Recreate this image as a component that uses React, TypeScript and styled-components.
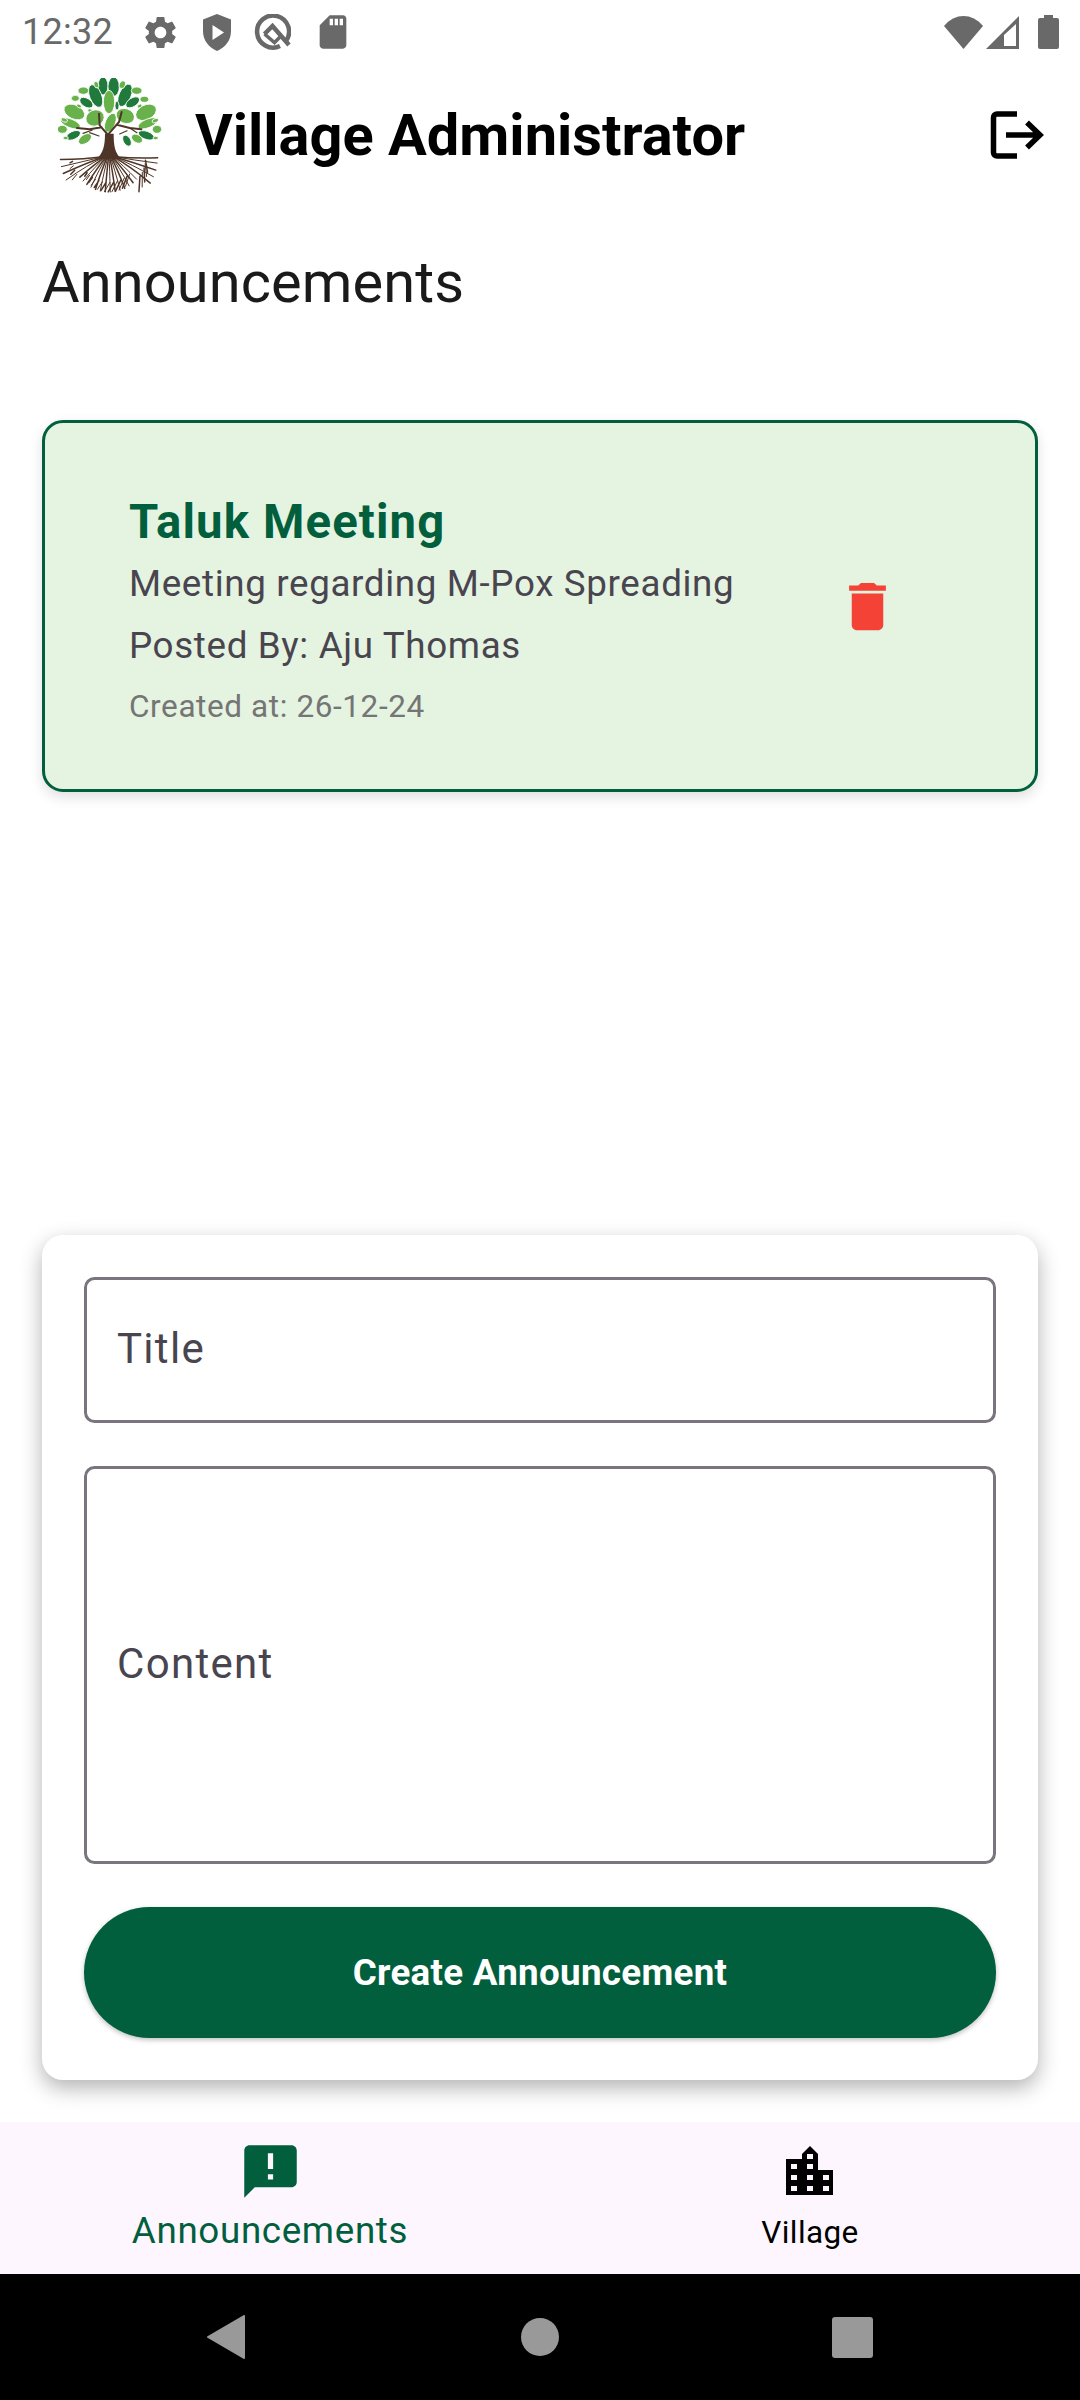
import React from 'react';
import styled, { createGlobalStyle } from 'styled-components';
import { MdAnnouncement, MdDelete, MdSdCard, MdSettings } from 'react-icons/md';

const GlobalStyle = createGlobalStyle`
  html, body {
    margin: 0;
    padding: 0;
    background: #fff;
    font-family: Roboto, "Noto Sans", sans-serif;
  }
`;

const GREEN = '#025f3d';

const Screen = styled.div`
  width: 1080px;
  height: 2400px;
  display: flex;
  flex-direction: column;
  overflow: hidden;
  background: #fff;
`;

const StatusBar = styled.div`
  height: 68px;
  box-sizing: border-box;
  flex: none;
  display: flex;
  align-items: center;
  justify-content: space-between;
  padding: 0 21px 4px 22px;
  color: #696969;
`;

const LeftIcons = styled.div`
  display: flex;
  align-items: center;
  gap: 22px;
`;

const RightIcons = styled.div`
  display: flex;
  align-items: center;
  gap: 3px;
`;

const Clock = styled.span`
  font-size: 36px;
  margin-right: 6px;
  letter-spacing: 0.3px;
`;

const Header = styled.header`
  flex: none;
  height: 134px;
  display: flex;
  align-items: center;
  padding: 0 36px 0 58px;
`;

const AppTitle = styled.h1`
  flex: 1;
  margin: 0 0 0 33px;
  font-size: 57.75px;
  font-weight: 700;
  color: #000;
`;

const Main = styled.main`
  flex: 1;
  padding: 0 42px;
`;

const PageTitle = styled.h2`
  margin: 46px 0 104px;
  font-size: 57.75px;
  line-height: 68px;
  font-weight: 400;
  letter-spacing: 0.1px;
  color: #1a1a1a;
`;

const AnnouncementCard = styled.article`
  height: 372px;
  box-sizing: border-box;
  display: flex;
  align-items: center;
  justify-content: space-between;
  padding: 0 136px 0 84px;
  background: #e5f3e1;
  border: 3px solid ${GREEN};
  border-radius: 21px;
  box-shadow: 0 5px 13px rgba(0, 0, 0, 0.13);
`;

const CardText = styled.div`
  display: flex;
  flex-direction: column;
  padding-top: 16px;
`;

const CardTitle = styled.h3`
  margin: 0;
  font-size: 47.25px;
  line-height: 62px;
  font-weight: 700;
  letter-spacing: 1.15px;
  color: ${GREEN};
`;

const CardLine = styled.p`
  margin: 0;
  font-size: 36.75px;
  line-height: 62px;
  letter-spacing: 0.65px;
  color: #49454f;
`;

const CardMeta = styled.p`
  margin: 0;
  font-size: 31.5px;
  line-height: 60px;
  letter-spacing: 0.6px;
  color: #757575;
`;

const FormCard = styled.form`
  flex: none;
  margin: 0 42px 42px;
  padding: 42px 42px 42px;
  display: flex;
  flex-direction: column;
  background: #fff;
  border-radius: 21px;
  box-shadow: 0 8px 21px rgba(0, 0, 0, 0.3);
`;

const Field = styled.label<{ $height: number }>`
  height: ${(p) => p.$height}px;
  box-sizing: border-box;
  display: flex;
  align-items: center;
  padding: 0 30px 4px;
  margin-bottom: 43px;
  border: 3px solid #79747e;
  border-radius: 10.5px;
  font-size: 42px;
  letter-spacing: 1.3px;
  color: #49454f;
`;

const SubmitButton = styled.button`
  height: 131px;
  border: 0;
  border-radius: 66px;
  background: ${GREEN};
  color: #fff;
  font-family: inherit;
  font-size: 36.75px;
  font-weight: 700;
  letter-spacing: 0.3px;
  box-shadow: 0 2px 5px rgba(0, 0, 0, 0.25);
`;

const TabBar = styled.nav`
  flex: none;
  height: 152px;
  display: grid;
  grid-template-columns: 1fr 1fr;
  background: #fdf6fe;
  position: relative;
`;

const Tab = styled.div<{ $active?: boolean }>`
  display: flex;
  flex-direction: column;
  align-items: center;
  padding-top: ${(p) => (p.$active ? 18 : 24)}px;
  color: ${(p) => (p.$active ? GREEN : '#000')};
`;

const TabLabel = styled.span<{ $active?: boolean }>`
  font-size: ${(p) => (p.$active ? 36.75 : 31.5)}px;
  line-height: 43px;
  letter-spacing: ${(p) => (p.$active ? 0.65 : 0.4)}px;
  margin-top: ${(p) => (p.$active ? 6 : 16)}px;
`;

const NavBar = styled.div`
  flex: none;
  height: 126px;
  background: #000;
  display: flex;
  align-items: center;
  justify-content: center;
`;

const NavSlot = styled.div`
  width: 312px;
  display: flex;
  justify-content: center;
`;

const BackSlot = styled(NavSlot)`
  padding-right: 4px;
  box-sizing: border-box;
`;

const BatterySlot = styled.div`
  display: flex;
  margin-left: 16px;
`;

const leaves: [number, number, number, number, number, string][] = [
  [190, 82, 15, 27, 0, 'd'], [222, 84, 17, 29, 0, 'd'], [168, 112, 18, 36, -22, 'd'], [256, 110, 18, 36, 24, 'd'],
  [140, 132, 22, 13, 32, 'd'], [279, 131, 23, 13, -32, 'd'], [101, 230, 23, 12, -25, 'd'], [320, 230, 25, 12, 20, 'd'],
  [262, 246, 11, 18, -30, 'd'], [232, 141, 6, 13, 0, 'd'], [155, 158, 12, 6, 25, 'l'],
  [208, 130, 17, 35, 0, 'l'], [131, 96, 16, 11, 0, 'l'], [291, 96, 16, 11, 0, 'l'], [107, 119, 12, 9, 0, 'l'], [314, 122, 13, 9, 0, 'l'],
  [104, 160, 33, 21, 25, 'l'], [319, 161, 33, 22, -27, 'l'], [166, 178, 28, 24, -22, 'l'], [257, 172, 28, 22, 20, 'l'],
  [92, 194, 32, 13, 22, 'l'], [325, 194, 32, 13, -22, 'l'], [68, 212, 15, 12, 0, 'l'], [352, 212, 14, 12, 0, 'l'],
  [212, 192, 15, 30, 22, 'l'], [136, 241, 22, 13, -35, 'l'], [292, 240, 18, 12, 30, 'l'], [74, 184, 10, 6, 20, 'l'], [347, 186, 10, 6, -20, 'l'],
  [248, 78, 9, 12, 20, 'l'], [170, 78, 7, 10, -20, 'l'], [78, 238, 8, 5, 0, 'l'], [348, 238, 8, 5, 0, 'l'], [118, 142, 8, 5, 30, 'l'], [300, 142, 8, 5, -30, 'l'],
];

// fan of roots: angle measured from straight down
const roots = [-86, -78, -70, -62, -54, -46, -38, -30, -22, -14, -6, 2, 10, 18, 26, 34, 42, 50, 58, 66, 74, 82, 88];

const rootPaths = roots.map((a) => {
  const rad = (a * Math.PI) / 180;
  const wide = Math.abs(a) > 55;
  const len = wide ? 146 : 108;
  const ex = 208 + Math.sin(rad) * len;
  const ey = 292 + Math.cos(rad) * len * (wide ? 1.05 : 1);
  const mx = 208 + Math.sin(rad) * len * 0.5;
  const my = 298 + Math.cos(rad) * len * 0.3;
  const fx = ex - Math.sin(rad + 0.5) * 34;
  const fy = ey - Math.cos(rad + 0.5) * 34 + 12;
  return `M${208 + a * 0.2} 294 Q${mx} ${my} ${ex} ${ey} M${(mx + ex) / 2} ${(my + ey) / 2 + 6} L${fx} ${fy + 16}`;
});

const VillageLogo = () => (
  <svg width="104" height="115" viewBox="55 58 312 345">
    {leaves.map(([x, y, rx, ry, rot, tone], i) => (
      <ellipse
        key={i}
        cx={x}
        cy={y}
        rx={rx}
        ry={ry}
        transform={`rotate(${rot} ${x} ${y})`}
        fill={tone === 'd' ? '#1f7a3c' : '#69b24b'}
        stroke="#fff"
        strokeWidth="2.500"
      />
    ))}
    <g fill="none" stroke="#4f3527" strokeLinecap="round">
      <path d="M208 232 L180 200 L178 165 M186 206 L150 212 L112 208 M205 228 L238 190 L246 160 M232 198 L270 208 L305 212" strokeWidth="6" />
      <path d="M178 232 L150 222 M240 226 L262 216 M158 214 L130 224 M270 208 L292 222" strokeWidth="3.500" />
      {rootPaths.map((d, i) => (
        <path key={i} d={d} strokeWidth={i % 2 ? 3 : 4.500} />
      ))}
    </g>
    <path d="M196 225 L222 225 C222 262 226 282 244 300 L172 300 C190 282 196 262 196 225Z" fill="#4f3527" />
  </svg>
);

const ShieldIcon = () => (
  <svg width="30" height="37" viewBox="0 0 30 37" fill="currentColor">
    <path d="M15 0 L29 5.500 V17 C29 26.500 23 33.800 15 37 C7 33.800 1 26.500 1 17 V5.500Z" />
    <path d="M10.500 11 L22 18.500 L10.500 26Z" fill="#fff" />
  </svg>
);

const QIcon = () => (
  <svg width="37" height="37" viewBox="0 0 37 37" fill="none" stroke="currentColor" strokeWidth="4.500">
    <path d="M26 32 A16 16 0 1 1 32 27" />
    <path d="M10.500 20 L18.500 12 L35 31" />
    <path d="M10.500 20 L20.500 28.500 L26.500 22.500" strokeWidth="3.500" />
  </svg>
);

const WifiIcon = () => (
  <svg width="39" height="33" viewBox="0 0 39 33" fill="currentColor">
    <path d="M0 10 C11 -3.300 28 -3.300 39 10 L19.500 33Z" />
  </svg>
);

const SignalIcon = () => (
  <svg width="33" height="33" viewBox="0 0 33 33">
    <path d="M33 0 V33 H0Z" fill="currentColor" />
    <path d="M30 8 V30 H18 V19Z" fill="#fff" />
  </svg>
);

const BatteryIcon = () => (
  <svg width="21" height="34" viewBox="0 0 21 34" fill="currentColor">
    <path d="M6 0 H15 V3 H19 A2 2 0 0 1 21 5 V32 A2 2 0 0 1 19 34 H2 A2 2 0 0 1 0 32 V5 A2 2 0 0 1 2 3 H6Z" />
  </svg>
);

const LogoutIcon = () => (
  <svg width="54" height="48" viewBox="0 0 54 48" fill="none" stroke="#000" strokeWidth="5.500">
    <path d="M27 3 H7 A3.500 3.500 0 0 0 3.500 6.500 V41.500 A3.500 3.500 0 0 0 7 45 H27" />
    <path d="M16 24 H50 M37 11.500 L50 24 L37 36.500" />
  </svg>
);

const CityIcon = () => (
  <svg width="48" height="49" viewBox="0 0 48 49" fill="#000">
    <path
      fillRule="evenodd"
      d="M0 13 H16 V8 L24 0 L32 8 V24 H47 V49 H0Z
         M21 8 V13 H27 V8Z M5 18 V23 H11 V18Z M21 18 V23 H27 V18Z
         M5 29 V34 H11 V29Z M21 29 V34 H27 V29Z M37 29 V34 H43 V29Z
         M5 40 V45 H11 V40Z M21 40 V45 H27 V40Z M37 40 V45 H43 V40Z"
    />
  </svg>
);

const BackIcon = () => (
  <svg width="38" height="44" viewBox="0 0 38 44" fill="#999">
    <path d="M37 1 V43 L1 22Z" stroke="#999" strokeLinejoin="round" strokeWidth="2" />
  </svg>
);

const HomeIcon = () => (
  <svg width="38" height="38" viewBox="0 0 38 38" fill="#999">
    <circle cx="19" cy="19" r="19" />
  </svg>
);

const RecentIcon = () => (
  <svg width="41" height="41" viewBox="0 0 41 41" fill="#999">
    <rect width="41" height="41" rx="3" />
  </svg>
);

export default function App() {
  return (
    <Screen>
      <GlobalStyle />
      <StatusBar>
        <LeftIcons>
          <Clock>12:32</Clock>
          <MdSettings size={39} />
          <ShieldIcon />
          <QIcon />
          <MdSdCard size={40} />
        </LeftIcons>
        <RightIcons>
          <WifiIcon />
          <SignalIcon />
          <BatterySlot>
            <BatteryIcon />
          </BatterySlot>
        </RightIcons>
      </StatusBar>
      <Header>
        <VillageLogo />
        <AppTitle>Village Administrator</AppTitle>
        <LogoutIcon />
      </Header>
      <Main>
        <PageTitle>Announcements</PageTitle>
        <AnnouncementCard>
          <CardText>
            <CardTitle>Taluk Meeting</CardTitle>
            <CardLine>Meeting regarding M-Pox Spreading</CardLine>
            <CardLine>Posted By: Aju Thomas</CardLine>
            <CardMeta>Created at: 26-12-24</CardMeta>
          </CardText>
          <MdDelete size={63} color="#f44336" />
        </AnnouncementCard>
      </Main>
      <FormCard>
        <Field $height={146}>Title</Field>
        <Field $height={398}>Content</Field>
        <SubmitButton type="button">Create Announcement</SubmitButton>
      </FormCard>
      <TabBar>
        <Tab $active>
          <MdAnnouncement size={63} />
          <TabLabel $active>Announcements</TabLabel>
        </Tab>
        <Tab>
          <CityIcon />
          <TabLabel>Village</TabLabel>
        </Tab>
      </TabBar>
      <NavBar>
        <BackSlot>
          <BackIcon />
        </BackSlot>
        <NavSlot>
          <HomeIcon />
        </NavSlot>
        <NavSlot>
          <RecentIcon />
        </NavSlot>
      </NavBar>
    </Screen>
  );
}
